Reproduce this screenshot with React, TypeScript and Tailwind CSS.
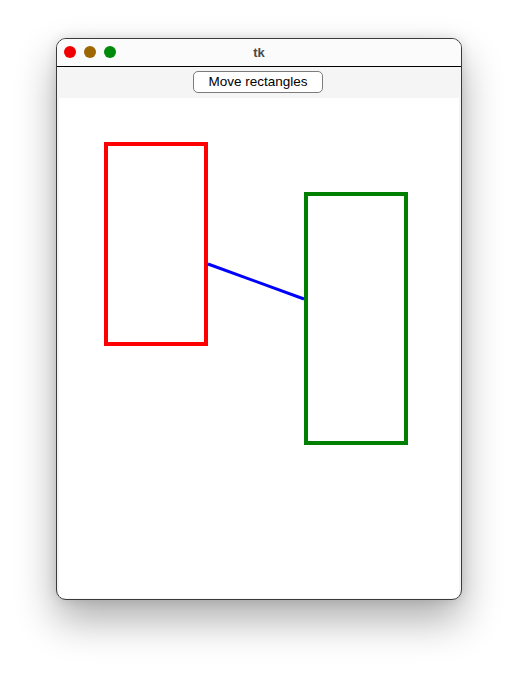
export default function App() {
  return (
    <div className="w-[518px] h-[674px] bg-white pt-[38px] pl-[56px]" style={{ fontFamily: '"Liberation Sans", Arial, sans-serif' }}>
      {/* Window */}
      <div className="w-[406px] h-[562px] rounded-[10px] border border-[#3a3a3a] bg-[#f5f5f5] overflow-hidden flex flex-col shadow-[0_20px_40px_rgba(0,0,0,0.32),0_0_12px_rgba(0,0,0,0.12)]">
        {/* Title bar */}
        <div className="h-[28px] shrink-0 bg-[#fbfbfb] border-b border-black relative flex items-center justify-center">
          <div className="absolute left-[7px] top-[7px] flex gap-[8px]">
            <span className="w-[12px] h-[12px] rounded-full bg-[#f00000]" />
            <span className="w-[12px] h-[12px] rounded-full bg-[#9c6600]" />
            <span className="w-[12px] h-[12px] rounded-full bg-[#008a0a]" />
          </div>
          <span className="text-[13px] font-bold text-[#4a4a4a]">tk</span>
        </div>

        {/* Toolbar */}
        <div className="h-[31px] shrink-0 flex items-start justify-center pt-[4px]">
          <button className="w-[130px] h-[22px] mr-[2px] rounded-[5px] border border-[#7c7c7c] bg-white text-[13.5px] text-black leading-none">
            Move rectangles
          </button>
        </div>

        {/* Canvas */}
        <div className="flex-1 mx-[2px] mb-[1px] bg-white">
          <svg width="400" height="500" viewBox="0 0 400 500">
            <rect x="47" y="46" width="100" height="200" fill="none" stroke="#ff0000" strokeWidth="4" />
            <rect x="247" y="96" width="100" height="249" fill="none" stroke="#008000" strokeWidth="4" />
            <line x1="149" y1="166" x2="245" y2="201" stroke="#0000ff" strokeWidth="3" />
          </svg>
        </div>
      </div>
    </div>
  );
}
